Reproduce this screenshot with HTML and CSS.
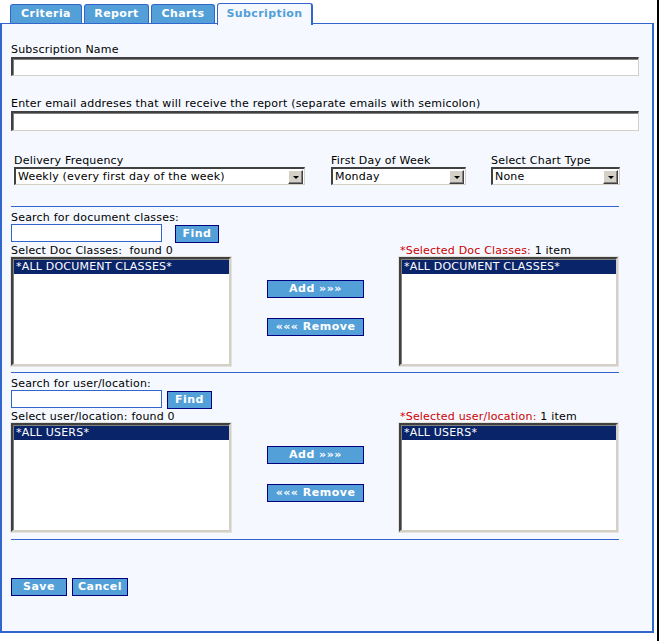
FILE: index.html
```html
<!DOCTYPE html>
<html>
<head>
<meta charset="utf-8">
<link rel="stylesheet" href="styles.css">
</head>
<body>
<div class="frame">
  <div class="tabs">
    <div class="tab t1">Criteria</div>
    <div class="tab t2">Report</div>
    <div class="tab t3">Charts</div>
    <div class="tab active">Subcription</div>
  </div>
  <div class="panel">
    <div class="field f-name">
      <div class="label">Subscription Name</div>
      <div class="textbox"></div>
    </div>
    <div class="field f-email">
      <div class="label">Enter email addreses that will receive the report (separate emails with semicolon)</div>
      <div class="textbox"></div>
    </div>
    <div class="selects">
      <div class="sel-col c1">
        <div class="label">Delivery Frequency</div>
        <div class="select w1"><span class="val">Weekly (every first day of the week)</span><span class="arrow"><i></i></span></div>
      </div>
      <div class="sel-col c2">
        <div class="label">First Day of Week</div>
        <div class="select w2"><span class="val">Monday</span><span class="arrow"><i></i></span></div>
      </div>
      <div class="sel-col c3">
        <div class="label">Select Chart Type</div>
        <div class="select w3"><span class="val">None</span><span class="arrow"><i></i></span></div>
      </div>
    </div>
    <div class="rule r1"></div>

    <div class="picker p-doc">
      <div class="search">
        <div class="label">Search for document classes:</div>
        <div class="search-row gap-wide">
          <div class="searchbox"></div>
          <div class="btn find">Find</div>
        </div>
      </div>
      <div class="label l-left">Select Doc Classes:&nbsp; found 0</div>
      <div class="label l-right"><span class="req">*Selected Doc Classes:</span> 1 item</div>
      <div class="listbox lb-left"><div class="opt">*ALL DOCUMENT CLASSES*</div></div>
      <div class="mid">
        <div class="btn move">Add »»»</div>
        <div class="btn move">««« Remove</div>
      </div>
      <div class="listbox lb-right"><div class="opt">*ALL DOCUMENT CLASSES*</div></div>
    </div>
    <div class="rule r2"></div>

    <div class="picker p-user">
      <div class="search">
        <div class="label">Search for user/location:</div>
        <div class="search-row gap-narrow">
          <div class="searchbox"></div>
          <div class="btn find">Find</div>
        </div>
      </div>
      <div class="label l-left">Select user/location: found 0</div>
      <div class="label l-right"><span class="req">*Selected user/location:</span> 1 item</div>
      <div class="listbox lb-left"><div class="opt">*ALL USERS*</div></div>
      <div class="mid">
        <div class="btn move">Add »»»</div>
        <div class="btn move">««« Remove</div>
      </div>
      <div class="listbox lb-right"><div class="opt">*ALL USERS*</div></div>
    </div>
    <div class="rule r3"></div>

    <div class="actions">
      <div class="btn save">Save</div>
      <div class="btn cancel">Cancel</div>
    </div>
  </div>
</div>
</body>
</html>
```
FILE: styles.css
```css
html, body {
  margin: 0;
  padding: 0;
  background: #ffffff;
}
body {
  font-family: "DejaVu Sans", Verdana, sans-serif;
  font-size: 11px;
  letter-spacing: 0.2px;
  color: #000;
}
.frame {
  width: 657px;
  height: 641px;
  border-right: 2px solid #000;
  box-sizing: content-box;
}
.tabs {
  display: flex;
  align-items: flex-end;
  padding-left: 10px;
  height: 24px;
  position: relative;
  z-index: 2;
}
.tab {
  box-sizing: border-box;
  height: 19px;
  margin-right: 1px;
  background: #539fd8;
  border: 1px solid #3366cc;
  border-bottom: none;
  border-radius: 3px 3px 0 0;
  color: #fff;
  font-weight: bold;
  font-size: 11px;
  letter-spacing: 0.4px;
  line-height: 17px;
  text-align: center;
  margin-bottom: 1px;
}
.t1 { width: 72px; }
.t2 { width: 65px; margin-left: 1px; }
.t3 { width: 64px; margin-left: 1px; }
.tab.active {
  width: 96px;
  height: 22px;
  margin-left: 1px;
  margin-bottom: 0;
  background: #f5f9ff;
  color: #539fd8;
  line-height: 20px;
  border-color: #3366cc;
  border-width: 1px 2px 0 1px;
  position: relative;
  top: 1px;
}
.panel {
  box-sizing: border-box;
  width: 654px;
  height: 610px;
  margin-top: -1px;
  border: 2px solid #3366cc;
  border-width: 1px 2px 2px 2px;
  background: #f5f9ff;
  padding: 19px 0 0 9px;
}
.label {
  line-height: 13px;
  white-space: nowrap;
}
.field .label { margin-bottom: 1px; }
.textbox {
  box-sizing: border-box;
  width: 628px;
  height: 19px;
  background: #fff;
  border-style: solid;
  border-width: 2px 1px 1px 2px;
  border-color: #404040 #d4d0c8 #d4d0c8 #404040;
  box-shadow: inset 1px 1px 0 #808080;
}
.f-email { margin-top: 21px; }
.f-email .textbox { height: 20px; }

.selects {
  display: flex;
  margin-top: 23px;
  padding-left: 3px;
}
.sel-col .label { margin-bottom: 0; }
.c1 { width: 317px; }
.c2 { width: 160px; }
.select {
  box-sizing: border-box;
  height: 18px;
  background: #fff;
  border-style: solid;
  border-width: 2px 1px 1px 2px;
  border-color: #404040 #d4d0c8 #d4d0c8 #404040;
  display: flex;
  align-items: center;
  justify-content: space-between;
  padding-right: 1px;
}
.w1 { width: 291px; }
.w2 { width: 135px; }
.w3 { width: 129px; }
.val {
  padding-left: 2px;
  font-size: 11px;
  line-height: 14px;
  white-space: nowrap;
}
.arrow {
  box-sizing: border-box;
  width: 15px;
  height: 14px;
  background: #d4d0c8;
  border-style: solid;
  border-width: 1px;
  border-color: #fff #404040 #404040 #fff;
  box-shadow: inset -1px -1px 0 #808080;
  display: flex;
  align-items: center;
  justify-content: center;
}
.arrow i {
  display: block;
  width: 0;
  height: 0;
  border-left: 3px solid transparent;
  border-right: 3px solid transparent;
  border-top: 3px solid #000;
  margin-top: 1px;
}
.rule {
  width: 608px;
  height: 1px;
  background: #3366cc;
  margin-left: 0px;
}
.r1 { margin-top: 21px; }
.r2 { margin-top: 6px; }
.r3 { margin-top: 7px; }

.picker {
  display: grid;
  grid-template-columns: 220px 168px 219px;
  grid-template-areas:
    "search search search"
    "ll mid lr"
    "lbl mid lbr";
  grid-template-rows: auto auto 109px;
  margin-top: 4px;
}
.search { grid-area: search; }
.l-left { grid-area: ll; margin-top: 2px; }
.l-right { grid-area: lr; margin-top: 2px; padding-left: 1px; }
.lb-left { grid-area: lbl; }
.lb-right { grid-area: lbr; }
.mid {
  grid-area: mid;
  display: flex;
  flex-direction: column;
  align-items: center;
  padding-top: 38px;
  gap: 20px;
  padding-left: 1px;
}
.req { color: #cc0000; }
.search-row {
  display: flex;
  align-items: flex-end;
  margin-top: 0px;
}
.gap-wide { gap: 13px; }
.gap-narrow { gap: 5px; }
.searchbox {
  box-sizing: border-box;
  width: 151px;
  height: 18px;
  background: #fff;
  border: 1px solid #3366cc;
}
.btn {
  box-sizing: border-box;
  background: #539fd8;
  border: 1px solid #000080;
  color: #fff;
  font-weight: bold;
  font-size: 11px;
  letter-spacing: 0.5px;
  text-align: center;
  height: 18px;
  line-height: 16px;
  white-space: nowrap;
}
.find { width: 44px; margin-bottom: -1px; }
.p-user .find { width: 45px; }
.move { width: 97px; }
.listbox {
  box-sizing: border-box;
  height: 109px;
  background: #fff;
  border-style: solid;
  border-width: 2px;
  border-color: #404040 #d4d0c8 #d4d0c8 #404040;
  box-shadow: 0 0 0 1px #e4e2dc, inset 1px 1px 0 #808080;
  padding: 1px 0 0 1px;
}
.opt {
  background: #0a246a;
  color: #fff;
  line-height: 14px;
  padding-left: 2px;
  white-space: nowrap;
}
.actions {
  display: flex;
  gap: 5px;
  margin-top: 38px;
}
.save { width: 56px; }
.cancel { width: 56px; }
```
